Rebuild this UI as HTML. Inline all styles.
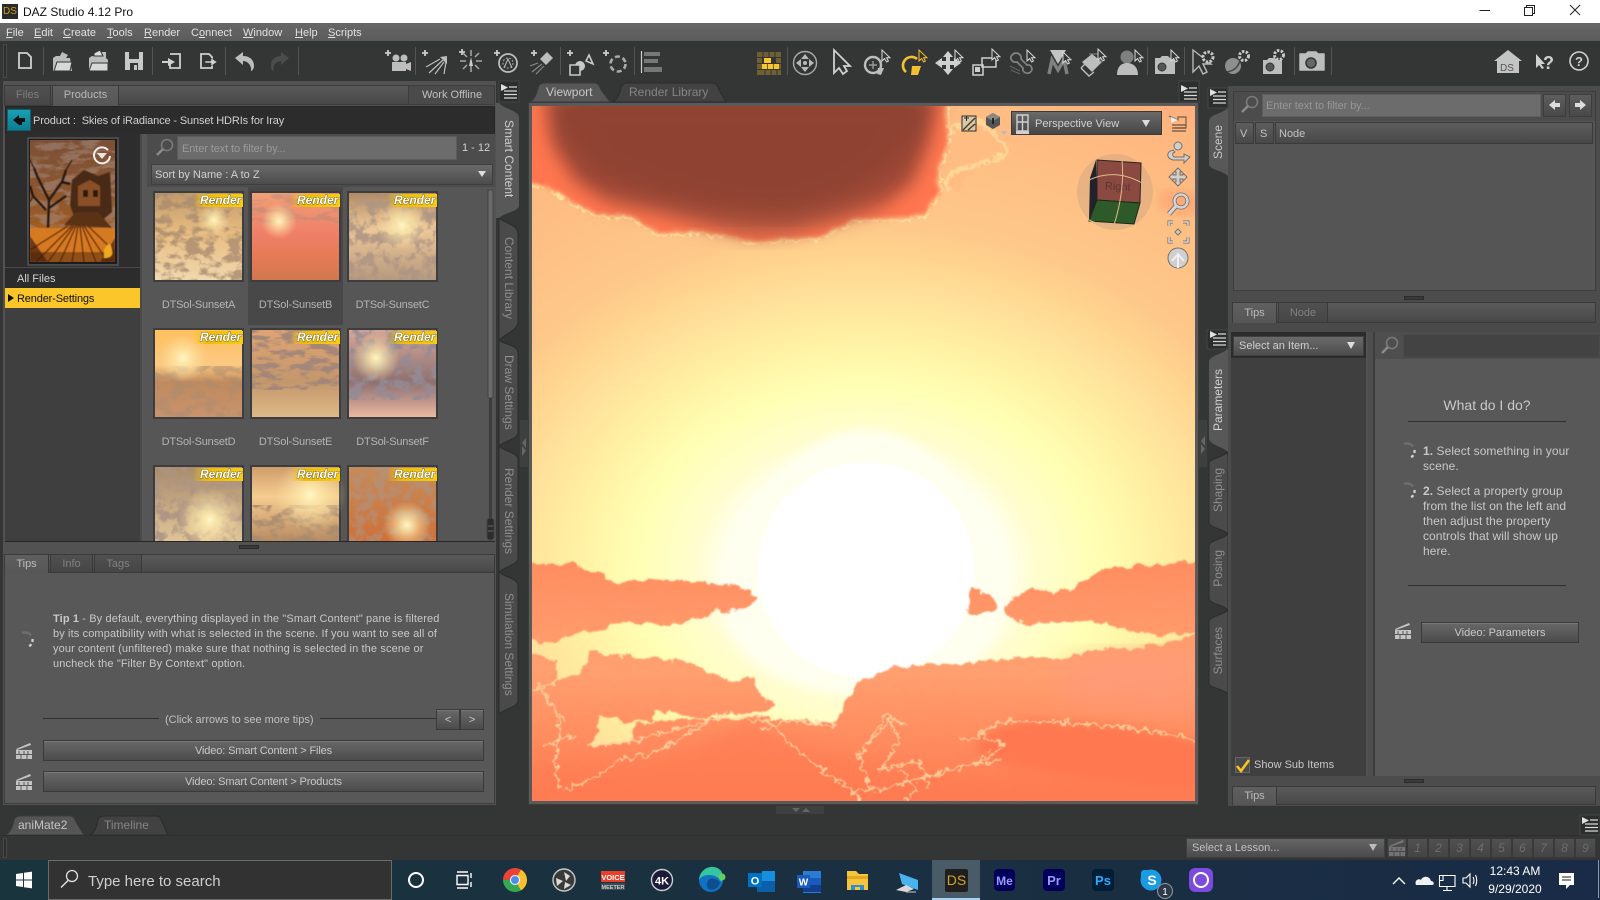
<!DOCTYPE html>
<html><head><meta charset="utf-8"><title>DAZ Studio 4.12 Pro</title>
<style>
html,body{margin:0;padding:0;width:1600px;height:900px;overflow:hidden;background:#343535;font-family:"Liberation Sans",sans-serif}
#r{position:relative;width:1600px;height:900px;overflow:hidden;background:#343535}
#r div{position:absolute;box-sizing:border-box}
svg{position:absolute;left:0;top:0;overflow:visible}
#sky{overflow:hidden}
.t{font-size:11px;line-height:16px;height:16px;white-space:nowrap;color:#c4c4c4;margin-top:1px}
.c{text-align:center}
.u{text-decoration:underline;text-underline-offset:1px}
.tip{letter-spacing:.12px}
.lb{letter-spacing:-.2px}
.st{letter-spacing:.06px;margin-top:0}
.btn{background:linear-gradient(#686868,#4c4c4c);border:1px solid #3a3a3a;box-shadow:inset 0 1px 0 #777;color:#c8c8c8;font-size:11px;text-align:center;line-height:21px;letter-spacing:-.13px}
.strip{background:linear-gradient(#5e5e5e,#484848);border:1px solid #3a3a3a}
.tab{background:linear-gradient(#5f5f5f,#565656);border:1px solid #3a3a3a;border-bottom:0;font-size:11px;text-align:center;color:#b4b4b4;line-height:19px}
.tabi{background:linear-gradient(#505050,#464646);border:1px solid #3a3a3a;font-size:11px;text-align:center;color:#858585;line-height:19px}
.vd{writing-mode:vertical-rl;font-size:12px;line-height:16px;white-space:nowrap;width:16px;text-align:center}
.vu{writing-mode:vertical-rl;transform:rotate(180deg);font-size:12px;line-height:16px;white-space:nowrap;width:16px;text-align:center}
.grip{background:#3a3a3a;border:1px solid #2c2c2c;height:4px}
.num{font-size:12px;font-style:italic;text-align:center;color:#6c6c6c;background:linear-gradient(#505050,#444);border:1px solid #393939;line-height:19px}
</style></head><body><div id="r">

<!-- title bar -->
<div style="left:0;top:0;width:1600px;height:23px;background:#fff"></div>
<div style="left:2px;top:4px;width:16px;height:15px;background:#2a2a2a"></div>
<div class="t" style="left:3px;top:3px;width:15px;font-size:10px;color:#c8a020">DS</div>
<div class="t" style="left:23px;top:3px;font-size:12px;color:#111">DAZ Studio 4.12 Pro</div>

<!-- menu -->
<div style="left:0;top:23px;width:1600px;height:18px;background:linear-gradient(#676767,#5b5b5b)"></div>
<div class="t" style="left:6px;top:24px;color:#e0e0e0"><span class="u">F</span>ile</div>
<div class="t" style="left:34px;top:24px;color:#e0e0e0"><span class="u">E</span>dit</div>
<div class="t" style="left:63px;top:24px;color:#e0e0e0"><span class="u">C</span>reate</div>
<div class="t" style="left:107px;top:24px;color:#e0e0e0"><span class="u">T</span>ools</div>
<div class="t" style="left:144px;top:24px;color:#e0e0e0"><span class="u">R</span>ender</div>
<div class="t" style="left:191px;top:24px;color:#e0e0e0">C<span class="u">o</span>nnect</div>
<div class="t" style="left:243px;top:24px;color:#e0e0e0"><span class="u">W</span>indow</div>
<div class="t" style="left:295px;top:24px;color:#e0e0e0"><span class="u">H</span>elp</div>
<div class="t" style="left:328px;top:24px;color:#e0e0e0"><span class="u">S</span>cripts</div>

<!-- viewport frame & sky -->
<div style="left:528px;top:102px;width:671px;height:703px;background:#5a5a5a;border:1px solid #3c3c3c"></div>
<svg id="sky" style="left:532px;top:106px" width="663" height="695" viewBox="532 106 663 695">
<defs>
<radialGradient id="skyg" gradientUnits="userSpaceOnUse" cx="866" cy="570" r="560" gradientTransform="translate(866 570) scale(1.25 1) translate(-866 -570)">
<stop offset="0" stop-color="#fff"/><stop offset=".2" stop-color="#fffff0"/><stop offset=".24" stop-color="#fffdd0"/><stop offset=".33" stop-color="#ffffb4"/><stop offset=".42" stop-color="#fff0a2"/><stop offset=".5" stop-color="#ffe09a"/><stop offset=".56" stop-color="#ffd48e"/><stop offset=".62" stop-color="#fec88a"/><stop offset=".8" stop-color="#febc82"/><stop offset="1" stop-color="#fdb07c"/>
</radialGradient>
<linearGradient id="cl" x1="0" y1="0" x2="0" y2="1"><stop offset="0" stop-color="#8f4233"/><stop offset=".6" stop-color="#a04837"/><stop offset="1" stop-color="#b85a40"/></linearGradient>
<linearGradient id="lc" gradientUnits="userSpaceOnUse" x1="0" y1="560" x2="0" y2="801"><stop offset="0" stop-color="#ff8d60"/><stop offset=".45" stop-color="#ffa070"/><stop offset="1" stop-color="#ff7a50"/></linearGradient>
<filter id="fz" x="-5%" y="-5%" width="110%" height="110%"><feTurbulence type="fractalNoise" baseFrequency=".09" numOctaves="4" seed="4"/><feDisplacementMap in="SourceGraphic" scale="11" xChannelSelector="R" yChannelSelector="G"/><feGaussianBlur stdDeviation=".8"/></filter>
<filter id="fzb" x="-5%" y="-5%" width="110%" height="110%"><feTurbulence type="fractalNoise" baseFrequency=".08" numOctaves="3" seed="4"/><feDisplacementMap in="SourceGraphic" scale="6" xChannelSelector="R" yChannelSelector="G"/><feGaussianBlur stdDeviation="2.4"/></filter>
<filter id="fv" x="-5%" y="-5%" width="110%" height="110%"><feTurbulence type="fractalNoise" baseFrequency=".14" numOctaves="3" seed="8"/><feDisplacementMap in="SourceGraphic" scale="12" xChannelSelector="R" yChannelSelector="G"/><feGaussianBlur stdDeviation=".5"/></filter>
<filter id="b12"><feGaussianBlur stdDeviation="12"/></filter>
<filter id="b9"><feGaussianBlur stdDeviation="9"/></filter>
<filter id="b5"><feGaussianBlur stdDeviation="5"/></filter>
</defs>
<rect x="532" y="106" width="663" height="695" fill="url(#skyg)"/>
<path d="M866 430C930 430 985 500 1005 590 1000 640 980 680 866 690 760 690 720 640 725 590 745 500 800 430 866 430Z" fill="#fffff0" filter="url(#b5)"/>
<circle cx="866" cy="570" r="108" fill="#fff"/>
<!-- top right flecks -->
<path d="M945 106H1020L1012 130 1000 150 975 165 958 190 940 190Z" fill="#ffbd84" filter="url(#fz)"/>
<path d="M950 130Q975 115 985 125T1005 145 975 165 950 190" fill="none" stroke="#ffe3a2" stroke-width="4" filter="url(#fv)" opacity=".7"/>
<path d="M1160 192Q1180 188 1200 196V214Q1175 216 1160 208Z" fill="#ff9a6c" filter="url(#b5)" opacity=".55"/>
<path d="M1040 100H1200V125Q1120 110 1040 100Z" fill="#ffb07c" filter="url(#b5)"/>
<!-- dark cloud -->
<path d="M525 181 551 190 572 203 598 217 628 217 658 235 697 233 727 237 757 244 792 240 818 240 856 220 899 220 925 217 940 193 940 167 949 143 947 96H525Z" fill="none" stroke="#ffeeaa" stroke-width="2.4" filter="url(#fv)"/>
<path d="M525 181 551 188 572 201 598 215 628 215 658 233 697 231 727 235 757 242 792 238 818 238 856 218 899 218 925 215 938 193 938 167 947 143 945 96H525Z" fill="#ff7650" filter="url(#fzb)"/>
<path d="M546 96 552 143 575 180 608 202 654 212 706 226 749 236 792 234 835 222 882 207 912 183 928 143 938 96Z" fill="url(#cl)" filter="url(#b9)"/>
<path d="M565 96 575 143 600 175 660 195 720 210 790 215 850 195 890 165 910 130 915 96Z" fill="#8f4233" filter="url(#b12)"/>
<!-- lower clouds -->
<g filter="url(#fz)" fill="url(#lc)">
<path d="M520 565 568 563 602 573 609 583 654 580 697 582 740 587 761 598 745 607 714 613 671 625 620 623 598 630 577 633 551 643 520 640Z"/>
<path d="M1206 562 1145 565 1102 570 1080 585 1054 592 1033 587 1007 603 1005 613 1029 625 1085 620 1128 630 1158 635 1206 632Z"/>
<path d="M973 588 990 593 996 607 981 617 966 613Z"/>
<path d="M520 650 555 660 559 680 581 673 590 652 637 657 684 660 727 680 753 677 762 697 779 707 762 713 723 712 697 718 654 710 654 720 628 722 598 717 598 737 585 747 628 742 637 723 719 717 783 720 835 723 856 683 895 667 955 663 1037 657 1059 660 1089 650 1128 650 1206 633V812H520Z"/>
</g>
<path d="M1060 665Q1130 650 1190 650V715Q1120 705 1060 700Z" fill="#ff9a7a" filter="url(#b12)" opacity=".7"/>
<path d="M530 760Q620 780 700 745T760 720 850 760 980 790 1200 760V812H530Z" fill="#ff7c52" filter="url(#b9)" opacity=".7"/>
<path d="M980 740Q1010 715 1060 722 1130 725 1200 742V790Q1100 785 1030 770T980 740Z" fill="#ff7850" filter="url(#b5)"/>
<g fill="none" stroke="#ffdca8" filter="url(#fv)" stroke-width="1.8" opacity=".85">
<path d="M975 738 1000 722 1060 722 1130 728 1200 740"/>
<path d="M552 700 560 730 555 765 560 790M540 690 565 720M545 745 575 735M565 790 590 780 620 760 650 755 720 715 770 722 790 745 850 790 880 790 950 770 1000 760"/>
<path d="M532 690 560 680"/>
<path d="M855 760 890 720 900 740 880 770 920 760 930 790M870 740 885 715 905 725M900 770 915 790 905 800"/>
<path d="M590 745 630 742 720 717"/>
<path d="M760 730 790 720 835 725M850 790 860 800"/>
<path d="M960 740 985 735 1005 745 975 765"/>
<path d="M858 750 870 790"/>
</g>
<!-- cube -->
<ellipse cx="1115" cy="192" rx="38" ry="38" fill="#c8a080" opacity=".4"/>
<path d="M1096 160 1090 178 1089 221 1097 202Z" fill="#22222c"/>
<path d="M1097 160 1141 163 1140 203 1097 200Z" fill="#8a4a42" stroke="#2e2220"/>
<path d="M1097 200 1140 203 1134 224 1089 221Z" fill="#2d5a28" stroke="#1a2a18"/>
<text x="1105" y="190" font-size="11" fill="#5e3632" font-family="Liberation Sans" transform="rotate(3 1115 186)">Right</text>
<path d="M1089 180Q1115 168 1142 183M1122 160Q1125 190 1114 225M1089 220Q1105 228 1134 225" fill="none" stroke="#e0b890" stroke-width="1"/>
</svg>

<!-- viewport combo -->
<div style="left:1011px;top:111px;width:151px;height:24px;background:linear-gradient(#6a6a6a,#464646);border:1px solid #3a3a3a"></div>
<div class="t" style="left:1035px;top:115px;color:#d0d0d0">Perspective View</div>

<!-- tabs viewport -->
<svg width="1600" height="900">
<path d="M530 102Q536 98 538 88Q539 83 545 83H594Q599 83 601 90L610 102Z" fill="#575757" stroke="#3a3a3a"/>
<path d="M613 102Q619 98 621 88Q622 83 628 83H712Q717 83 719 90L726 102Z" fill="#424242" stroke="#2c2c2c"/>
<path d="M5 835Q12 832 14 820Q15 816 21 816H70Q74 816 76 822L84 835Z" fill="#555" stroke="#3a3a3a"/>
<path d="M90 835Q96 832 98 820Q99 816 105 816H156Q160 816 162 822L168 835Z" fill="#424242" stroke="#2c2c2c"/>
</svg>
<div class="t" style="left:546px;top:83px;font-size:12px;color:#c8c8c8">Viewport</div>
<div class="t" style="left:629px;top:83px;font-size:12px;color:#858585">Render Library</div>
<div class="t" style="left:18px;top:816px;font-size:12px;color:#c4c4c4">aniMate2</div>
<div class="t" style="left:104px;top:816px;font-size:12px;color:#858585">Timeline</div>

<!-- LEFT panel -->
<div style="left:3px;top:81px;width:493px;height:724px;background:#525252"></div>
<div style="left:4px;top:85px;width:491px;height:20px;background:linear-gradient(#5a5a5a,#484848);border:1px solid #3a3a3a"></div>
<div class="tabi" style="left:4px;top:85px;width:47px;height:21px;color:#7f7f7f">Files</div>
<div class="tab" style="left:52px;top:85px;width:67px;height:21px;color:#b8b8b8">Products</div>
<div style="left:408px;top:85px;width:87px;height:20px;background:#4a4a4a;border:1px solid #3d3d3d"></div>
<div class="t" style="left:422px;top:86px;color:#c0c0c0">Work Offline</div>
<div style="left:5px;top:106px;width:490px;height:436px;background:#2c2c2c;border:1px solid #262626"></div>
<div style="left:7px;top:109px;width:24px;height:22px;background:linear-gradient(#18a0b4,#0e7c90);border:1px solid #0c6070"></div>
<div class="t" style="left:33px;top:112px;color:#d0d0d0;letter-spacing:-.13px">Product :&nbsp; Skies of iRadiance - Sunset HDRIs for Iray</div>
<div style="left:5px;top:134px;width:135px;height:407px;background:#3f3f3f"></div>
<div style="left:5px;top:134px;width:135px;height:133px;background:#2d2d2d"></div>
<div style="left:5px;top:267px;width:135px;height:21px;background:#2c2c2c;border-top:1px solid #4a4a4a"></div>
<div class="t" style="left:17px;top:270px;color:#d4d4d4">All Files</div>
<div style="left:5px;top:288px;width:135px;height:20px;background:#fac62a"></div>
<div class="t" style="left:17px;top:290px;color:#111;letter-spacing:-.15px">Render-Settings</div>
<div style="left:8px;top:294px;width:0;height:0;border-left:6px solid #111;border-top:4px solid transparent;border-bottom:4px solid transparent"></div>
<div style="left:140px;top:134px;width:7px;height:407px;background:#565656;border-left:2px solid #4a4a4a"></div>
<div style="left:147px;top:134px;width:348px;height:407px;background:#565656"></div>
<div style="left:147px;top:134px;width:348px;height:53px;background:#4c4c4c"></div>
<div style="left:177px;top:136px;width:280px;height:24px;background:#6c6c6c;border:1px solid #5c5c5c"></div>
<div class="t" style="left:182px;top:140px;color:#9a9a9a;letter-spacing:-.1px">Enter text to filter by...</div>
<div class="t" style="left:462px;top:139px;color:#d0d0d0">1 - 12</div>
<div style="left:151px;top:164px;width:342px;height:21px;background:linear-gradient(#6a6a6a,#4c4c4c);border:1px solid #3f3f3f"></div>
<div class="t" style="left:155px;top:166px;color:#d0d0d0">Sort by Name : A to Z</div>
<div style="left:248px;top:187px;width:95px;height:138px;background:#484848"></div>

<!-- thumbs -->
<svg width="1600" height="900">
<defs>
<filter id="n1" x="0" y="0" width="1" height="1"><feTurbulence type="fractalNoise" baseFrequency=".07 .11" numOctaves="5" seed="3"/><feColorMatrix values="0 0 0 0 .40 0 0 0 0 .26 0 0 0 0 .16 5 0 0 0 -2.2"/></filter>
<filter id="n2" x="0" y="0" width="1" height="1"><feTurbulence type="fractalNoise" baseFrequency=".09" numOctaves="5" seed="9"/><feColorMatrix values="0 0 0 0 .42 0 0 0 0 .30 0 0 0 0 .23 5 0 0 0 -2.2"/></filter>
<filter id="n3" x="0" y="0" width="1" height="1"><feTurbulence type="fractalNoise" baseFrequency=".05 .14" numOctaves="5" seed="15"/><feColorMatrix values="0 0 0 0 .36 0 0 0 0 .24 0 0 0 0 .19 5.500 0 0 0 -2.500"/></filter>
<filter id="n4" x="0" y="0" width="1" height="1"><feTurbulence type="fractalNoise" baseFrequency=".08 .1" numOctaves="5" seed="21"/><feColorMatrix values="0 0 0 0 .30 0 0 0 0 .26 0 0 0 0 .30 5 0 0 0 -2.200"/></filter>
<linearGradient id="tA" x1="0" y1="0" x2="0" y2="1"><stop offset="0" stop-color="#c09a6c"/><stop offset=".45" stop-color="#e8bc80"/><stop offset="1" stop-color="#f0d8ae"/></linearGradient>
<linearGradient id="tB" x1="0" y1="0" x2="0" y2="1"><stop offset="0" stop-color="#f0a078"/><stop offset=".45" stop-color="#f0806a"/><stop offset=".7" stop-color="#e87b58"/><stop offset="1" stop-color="#d2774f"/></linearGradient>
<linearGradient id="tC" x1="0" y1="0" x2="0" y2="1"><stop offset="0" stop-color="#b08a64"/><stop offset=".4" stop-color="#eec898"/><stop offset="1" stop-color="#b79a7e"/></linearGradient>
<linearGradient id="tD" x1="0" y1="0" x2="0" y2="1"><stop offset="0" stop-color="#ffc05e"/><stop offset=".4" stop-color="#fbc982"/><stop offset=".6" stop-color="#c08a5e"/><stop offset="1" stop-color="#c8936e"/></linearGradient>
<linearGradient id="tE" x1="0" y1="0" x2="0" y2="1"><stop offset="0" stop-color="#e0a474"/><stop offset=".6" stop-color="#c4976c"/><stop offset="1" stop-color="#deb988"/></linearGradient>
<linearGradient id="tF" x1="0" y1="0" x2="0" y2="1"><stop offset="0" stop-color="#d6a898"/><stop offset=".6" stop-color="#8e7070"/><stop offset="1" stop-color="#eab8a0"/></linearGradient>
<linearGradient id="tG" x1="0" y1="0" x2="0" y2="1"><stop offset="0" stop-color="#a88c6c"/><stop offset="1" stop-color="#e0c498"/></linearGradient>
<linearGradient id="tH" x1="0" y1="0" x2="0" y2="1"><stop offset="0" stop-color="#d09c6c"/><stop offset=".4" stop-color="#f6cc90"/><stop offset="1" stop-color="#b88c64"/></linearGradient>
<linearGradient id="tI" x1="0" y1="0" x2="0" y2="1"><stop offset="0" stop-color="#c48c5c"/><stop offset="1" stop-color="#d07038"/></linearGradient>
<radialGradient id="gl"><stop offset="0" stop-color="#fff6c8"/><stop offset=".2" stop-color="#ffeeb0" stop-opacity=".85"/><stop offset="1" stop-color="#ffe0a0" stop-opacity="0"/></radialGradient>
<linearGradient id="bdg" x1="0" y1="0" x2="1" y2="0"><stop offset="0" stop-color="#f5c400" stop-opacity="0"/><stop offset=".3" stop-color="#eebc08"/><stop offset="1" stop-color="#f8cc10"/></linearGradient>
<clipPath id="rc"><rect x="153" y="467" width="285" height="74"/></clipPath>
<clipPath id="pc"><rect x="30" y="140" width="85" height="122"/></clipPath>
<filter id="sb"><feGaussianBlur stdDeviation=".6"/></filter>
</defs>
<g fill="#3d3d3d">
<rect x="153" y="191" width="91" height="91"/><rect x="250" y="191" width="91" height="91"/><rect x="347" y="191" width="91" height="91"/>
<rect x="153" y="328" width="91" height="91"/><rect x="250" y="328" width="91" height="91"/><rect x="347" y="328" width="91" height="91"/>
<rect x="153" y="465" width="91" height="76"/><rect x="250" y="465" width="91" height="76"/><rect x="347" y="465" width="91" height="76"/>
</g>
<rect x="155" y="193" width="87" height="87" fill="url(#tA)"/><rect x="155" y="193" width="87" height="87" filter="url(#n1)" opacity=".8"/><circle cx="214" cy="220" r="16" fill="url(#gl)"/>
<rect x="252" y="193" width="87" height="87" fill="url(#tB)"/><rect x="252" y="193" width="87" height="30" filter="url(#n3)" opacity=".35"/><circle cx="279" cy="221" r="18" fill="url(#gl)"/>
<rect x="349" y="193" width="87" height="87" fill="url(#tC)"/><rect x="349" y="193" width="87" height="87" filter="url(#n2)" opacity=".85"/><circle cx="402" cy="225" r="26" fill="url(#gl)"/>
<rect x="155" y="330" width="87" height="87" fill="url(#tD)"/><rect x="155" y="366" width="87" height="51" filter="url(#n1)" opacity=".5"/><circle cx="183" cy="358" r="24" fill="url(#gl)"/>
<rect x="252" y="330" width="87" height="87" fill="url(#tE)"/><rect x="252" y="330" width="87" height="60" filter="url(#n3)" opacity=".95"/>
<rect x="349" y="330" width="87" height="87" fill="url(#tF)"/><rect x="349" y="330" width="87" height="70" filter="url(#n4)" opacity=".9"/><circle cx="376" cy="358" r="24" fill="url(#gl)"/>
<rect x="155" y="467" width="87" height="74" fill="url(#tG)"/><rect x="155" y="467" width="87" height="74" filter="url(#n2)" opacity=".9"/>
<rect x="252" y="467" width="87" height="74" fill="url(#tH)"/><rect x="252" y="505" width="87" height="36" filter="url(#n1)" opacity=".85"/>
<rect x="349" y="467" width="87" height="74" fill="url(#tI)"/><rect x="349" y="467" width="87" height="74" filter="url(#n2)" opacity=".6"/>
<g clip-path="url(#rc)"><circle cx="210" cy="520" r="32" fill="url(#gl)"/><circle cx="310" cy="495" r="36" fill="url(#gl)"/><circle cx="407" cy="525" r="24" fill="url(#gl)"/></g>
<g fill="url(#bdg)">
<rect x="193" y="194" width="50" height="13"/><rect x="290" y="194" width="50" height="13"/><rect x="387" y="194" width="50" height="13"/>
<rect x="193" y="331" width="50" height="13"/><rect x="290" y="331" width="50" height="13"/><rect x="387" y="331" width="50" height="13"/>
<rect x="193" y="468" width="50" height="13"/><rect x="290" y="468" width="50" height="13"/><rect x="387" y="468" width="50" height="13"/>
</g>
<g font-family="Liberation Sans" font-size="12" font-weight="bold" font-style="italic" fill="#fff" style="paint-order:stroke" stroke="#5a4a10" stroke-width=".8">
<text x="200" y="204">Render</text><text x="297" y="204">Render</text><text x="394" y="204">Render</text>
<text x="200" y="341">Render</text><text x="297" y="341">Render</text><text x="394" y="341">Render</text>
<text x="200" y="478">Render</text><text x="297" y="478">Render</text><text x="394" y="478">Render</text>
</g>
<!-- product thumb -->
<rect x="27" y="137" width="92" height="129" fill="#4a4a4a"/><rect x="29" y="139" width="88" height="125" fill="#1c1c1c"/>
<defs><linearGradient id="pt" x1="0" y1="0" x2="0" y2="1"><stop offset="0" stop-color="#7c5036"/><stop offset=".4" stop-color="#8a5630"/><stop offset=".68" stop-color="#9c5a24"/><stop offset=".85" stop-color="#c4701f"/><stop offset="1" stop-color="#6e3a18"/></linearGradient></defs>
<g clip-path="url(#pc)">
<rect x="30" y="140" width="85" height="122" fill="url(#pt)"/>
<rect x="30" y="140" width="85" height="122" filter="url(#n3)" opacity=".6"/>
<g filter="url(#sb)">
<path d="M72 180 84 170 98 176 110 172 112 212 100 222 76 222 70 205Z" fill="#4a2a18"/>
<path d="M78 186 90 180 100 186V206H78Z" fill="#8a5026"/><path d="M83 190h5v7h-5zM93 190h5v7h-5z" fill="#2c1a10"/>
<g stroke="#24130a" fill="none"><path d="M48 228 49 200 38 178M49 200 62 182 70 184M49 208 66 196M46 210 33 196 30 186M38 178 34 168M62 182 66 170" stroke-width="2.2"/><path d="M34 168 30 160M66 170 72 160M33 196 30 202" stroke-width="1"/></g>
<path d="M64 225 76 212H98L112 228Z" fill="#5a3018"/>
<path d="M30 228H115V262H30Z" fill="#d67a22"/>
<g stroke="#6e3010" stroke-width="1.5"><path d="M72 226 36 262M74 226 48 262M76 226 60 262M78 226 72 262M80 226 84 262M82 226 96 262M84 226 108 262M68 226 30 250M88 226 115 252"/></g>
<path d="M30 236V262H48Z M115 238V262H100Z" fill="#3e1e0c" opacity=".7"/>
<path d="M30 252H115V262H30Z" fill="#4a2410" opacity=".5"/>
<path d="M104 250Q110 238 112 250Q114 258 104 258Z" fill="#f0a820"/>
</g></g>
<path d="M108 150A8 8 0 1 0 110 156" fill="none" stroke="#f0f0f0" stroke-width="2"/>
<path d="M97 153H107L102 159Z" fill="#e8e8e8"/>
<!-- scrollbars -->
<rect x="488" y="190" width="5" height="208" fill="#6a6a6a" stroke="#444"/>
<rect x="489" y="398" width="3" height="120" fill="#3c3c3c"/>
<rect x="487" y="518" width="7" height="22" rx="3" fill="#2c2c2c" stroke="#444"/>
<path d="M488 526h5M488 531h5" stroke="#666"/>
</svg>
<div class="t c lb" style="left:153px;top:296px;width:91px;color:#b4b4b4">DTSol-SunsetA</div>
<div class="t c lb" style="left:250px;top:296px;width:91px;color:#b4b4b4">DTSol-SunsetB</div>
<div class="t c lb" style="left:347px;top:296px;width:91px;color:#b4b4b4">DTSol-SunsetC</div>
<div class="t c lb" style="left:153px;top:433px;width:91px;color:#b4b4b4">DTSol-SunsetD</div>
<div class="t c lb" style="left:250px;top:433px;width:91px;color:#b4b4b4">DTSol-SunsetE</div>
<div class="t c lb" style="left:347px;top:433px;width:91px;color:#b4b4b4">DTSol-SunsetF</div>

<!-- Left lower -->
<div class="grip" style="left:239px;top:545px;width:20px"></div>
<div style="left:4px;top:554px;width:491px;height:19px;background:linear-gradient(#5a5a5a,#484848);border:1px solid #3a3a3a"></div>
<div class="tab" style="left:4px;top:554px;width:45px;height:20px;color:#bbb;line-height:18px">Tips</div>
<div class="tabi" style="left:50px;top:554px;width:43px;height:19px;color:#808080;line-height:18px">Info</div>
<div class="tabi" style="left:94px;top:554px;width:48px;height:19px;color:#808080;line-height:18px">Tags</div>
<div style="left:4px;top:573px;width:491px;height:231px;background:#585858;border:1px solid #3e3e3e;border-top:0"></div>
<div class="t tip" style="left:53px;top:610px;color:#c8c8c8"><b>Tip 1</b> - By default, everything displayed in the "Smart Content" pane is filtered</div>
<div class="t tip" style="left:53px;top:625px;color:#c8c8c8">by its compatibility with what is selected in the scene. If you want to see all of</div>
<div class="t tip" style="left:53px;top:640px;color:#c8c8c8">your content (unfiltered) make sure that nothing is selected in the scene or</div>
<div class="t tip" style="left:53px;top:655px;color:#c8c8c8">uncheck the "Filter By Context" option.</div>
<div style="left:43px;top:718px;width:116px;height:1px;background:#2f2f2f"></div>
<div style="left:320px;top:718px;width:116px;height:1px;background:#2f2f2f"></div>
<div class="t" style="left:165px;top:711px;color:#c0c0c0">(Click arrows to see more tips)</div>
<div class="btn" style="left:436px;top:709px;width:24px;height:21px;line-height:20px">&lt;</div>
<div class="btn" style="left:460px;top:709px;width:24px;height:21px;line-height:20px">&gt;</div>
<div class="btn" style="left:43px;top:740px;width:441px;height:21px">Video: Smart Content &gt; Files</div>
<div class="btn" style="left:43px;top:771px;width:441px;height:21px">Video: Smart Content &gt; Products</div>

<!-- left dock tabs -->
<svg width="1600" height="900">
<path d="M499 218C505 224 518 224 518 234V322C518 330 505 334 499 340Z" fill="#4a4a4a" stroke="#2c2c2c"/>
<path d="M499 340C505 345 518 345 518 353V432C518 440 505 440 499 446Z" fill="#4a4a4a" stroke="#2c2c2c"/>
<path d="M499 446C505 452 518 452 518 460V558C518 565 505 566 499 572Z" fill="#4a4a4a" stroke="#2c2c2c"/>
<path d="M499 572C505 578 518 578 518 586V700C518 708 505 708 499 714Z" fill="#4a4a4a" stroke="#2c2c2c"/>
<path d="M496 103H499C505 110 519 110 519 118V205C519 212 505 212 499 218H496Z" fill="#585858"/>
<!-- right dock -->
<path d="M1228 108C1222 114 1209 114 1209 122V164C1209 170 1222 170 1228 176Z" fill="#585858"/>
<path d="M1228 349C1222 354 1209 356 1209 362V438C1209 445 1222 446 1228 452Z" fill="#585858"/>
<path d="M1228 452C1222 458 1209 458 1209 464V522C1209 528 1222 528 1228 534Z" fill="#4a4a4a" stroke="#2c2c2c"/>
<path d="M1228 534C1222 540 1209 540 1209 546V598C1209 604 1222 604 1228 610Z" fill="#4a4a4a" stroke="#2c2c2c"/>
<path d="M1228 610C1222 616 1209 616 1209 622V683C1209 688 1222 688 1228 694Z" fill="#4a4a4a" stroke="#2c2c2c"/>
<!-- collapse handles -->
<rect x="520" y="420" width="8" height="47" fill="#3e3f3f"/><path d="M526 438 522 443 526 448ZM522 446 526 451 522 456Z" fill="#666"/>
<rect x="1199" y="420" width="8" height="47" fill="#3e3f3f"/><path d="M1205 436 1201 441 1205 446ZM1201 444 1205 449 1201 454Z" fill="#666"/>
</svg>
<div class="vd" style="left:501px;top:120px;color:#cfcfcf">Smart Content</div>
<div class="vd" style="left:501px;top:237px;color:#8f8f8f">Content Library</div>
<div class="vd" style="left:501px;top:355px;color:#8f8f8f">Draw Settings</div>
<div class="vd" style="left:501px;top:468px;color:#8f8f8f">Render Settings</div>
<div class="vd" style="left:501px;top:593px;color:#8f8f8f">Simulation Settings</div>
<div class="vu" style="left:1210px;top:125px;color:#c8c8c8">Scene</div>
<div class="vu" style="left:1210px;top:369px;color:#d0d0d0">Parameters</div>
<div class="vu" style="left:1210px;top:468px;color:#8f8f8f">Shaping</div>
<div class="vu" style="left:1210px;top:550px;color:#8f8f8f">Posing</div>
<div class="vu" style="left:1210px;top:627px;color:#8f8f8f">Surfaces</div>

<!-- RIGHT panel -->
<div style="left:1228px;top:86px;width:372px;height:720px;background:#4c4c4c"></div>
<div style="left:1233px;top:91px;width:363px;height:200px;background:#555;border:1px solid #3e3e3e"></div>
<div style="left:1234px;top:92px;width:361px;height:29px;background:#4c4c4c"></div>
<div style="left:1262px;top:94px;width:279px;height:23px;background:#6c6c6c;border:1px solid #5e5e5e"></div>
<div class="t" style="left:1266px;top:97px;color:#969696;letter-spacing:-.1px">Enter text to filter by...</div>
<div style="left:1543px;top:94px;width:23px;height:23px;background:linear-gradient(#5e5e5e,#484848);border:1px solid #3d3d3d"></div>
<div style="left:1569px;top:94px;width:23px;height:23px;background:linear-gradient(#5e5e5e,#484848);border:1px solid #3d3d3d"></div>
<div class="strip" style="left:1235px;top:122px;width:19px;height:22px"></div>
<div class="strip" style="left:1255px;top:122px;width:19px;height:22px"></div>
<div class="strip" style="left:1275px;top:122px;width:318px;height:22px"></div>
<div class="t" style="left:1240px;top:125px;color:#c4c4c4">V</div>
<div class="t" style="left:1260px;top:125px;color:#c4c4c4">S</div>
<div class="t" style="left:1279px;top:125px;color:#c4c4c4">Node</div>
<div class="grip" style="left:1404px;top:296px;width:20px"></div>
<div style="left:1232px;top:302px;width:364px;height:21px;background:linear-gradient(#5a5a5a,#484848);border:1px solid #3a3a3a"></div>
<div class="tab" style="left:1232px;top:302px;width:45px;height:21px;color:#bbb;line-height:21px">Tips</div>
<div class="tabi" style="left:1278px;top:302px;width:50px;height:21px;color:#808080;line-height:21px">Node</div>
<div style="left:1228px;top:323px;width:372px;height:9px;background:#4a4a4a"></div>
<div style="left:1231px;top:332px;width:135px;height:444px;background:#3f3f3f"></div>
<div style="left:1231px;top:332px;width:135px;height:26px;background:#2c2c2c"></div>
<div style="left:1233px;top:336px;width:131px;height:20px;background:linear-gradient(#6a6a6a,#4c4c4c);border:1px solid #3f3f3f"></div>
<div class="t" style="left:1239px;top:337px;color:#d0d0d0">Select an Item...</div>
<div style="left:1366px;top:332px;width:9px;height:444px;background:#4e4e4e;border-left:2px solid #525252;border-right:2px solid #3d3d3d"></div>
<div style="left:1375px;top:332px;width:225px;height:444px;background:#585858"></div>
<div style="left:1375px;top:332px;width:225px;height:27px;background:#4e4e4e"></div>
<div style="left:1403px;top:334px;width:197px;height:24px;background:#434343;border:1px solid #4a4a4a"></div>
<div class="t c" style="left:1407px;top:396px;width:160px;font-size:14px;color:#c8c8c8">What do I do?</div>
<div style="left:1408px;top:421px;width:158px;height:1px;background:#2e2e2e"></div>
<div class="t st" style="left:1423px;top:443px;font-size:12px;color:#c8c8c8"><b>1.</b> Select something in your</div>
<div class="t st" style="left:1423px;top:458px;font-size:12px;color:#c8c8c8">scene.</div>
<div class="t st" style="left:1423px;top:483px;font-size:12px;color:#c8c8c8"><b>2.</b> Select a property group</div>
<div class="t st" style="left:1423px;top:498px;font-size:12px;color:#c8c8c8">from the list on the left and</div>
<div class="t st" style="left:1423px;top:513px;font-size:12px;color:#c8c8c8">then adjust the property</div>
<div class="t st" style="left:1423px;top:528px;font-size:12px;color:#c8c8c8">controls that will show up</div>
<div class="t st" style="left:1423px;top:543px;font-size:12px;color:#c8c8c8">here.</div>
<div style="left:1408px;top:585px;width:158px;height:1px;background:#2e2e2e"></div>
<div class="btn" style="left:1421px;top:622px;width:158px;height:21px;letter-spacing:0">Video: Parameters</div>
<div style="left:1235px;top:757px;width:15px;height:16px;background:#4a4a4a;border:1px solid #666"></div>
<div class="t" style="left:1254px;top:756px;color:#c8c8c8">Show Sub Items</div>
<div class="grip" style="left:1404px;top:779px;width:20px"></div>
<div style="left:1232px;top:786px;width:364px;height:19px;background:linear-gradient(#5a5a5a,#484848);border:1px solid #3a3a3a"></div>
<div class="tab" style="left:1232px;top:786px;width:45px;height:19px;line-height:18px;color:#bbb">Tips</div>

<!-- bottom strip -->
<div style="left:0;top:835px;width:1600px;height:1px;background:#2e2e2e"></div>
<div style="left:1186px;top:838px;width:199px;height:20px;background:linear-gradient(#666,#4a4a4a);border:1px solid #3f3f3f"></div>
<div class="t" style="left:1192px;top:839px;color:#c0c0c0">Select a Lesson...</div>
<div class="num" style="left:1387px;top:838px;width:20px;height:20px"></div>
<div class="num" style="left:1407px;top:838px;width:21px;height:20px">1</div>
<div class="num" style="left:1428px;top:838px;width:21px;height:20px">2</div>
<div class="num" style="left:1449px;top:838px;width:21px;height:20px">3</div>
<div class="num" style="left:1470px;top:838px;width:21px;height:20px">4</div>
<div class="num" style="left:1491px;top:838px;width:21px;height:20px">5</div>
<div class="num" style="left:1512px;top:838px;width:21px;height:20px">6</div>
<div class="num" style="left:1533px;top:838px;width:21px;height:20px">7</div>
<div class="num" style="left:1554px;top:838px;width:21px;height:20px">8</div>
<div class="num" style="left:1575px;top:838px;width:21px;height:20px">9</div>
<div style="left:3px;top:838px;width:4px;height:20px;background:#2c2d2d;border:1px solid #484848"></div>
<div style="left:3px;top:44px;width:4px;height:34px;background:#2c2d2d;border:1px solid #484848"></div>
<div style="left:776px;top:806px;width:48px;height:8px;background:#3e3f3f"></div>

<!-- Taskbar -->
<div style="left:0;top:860px;width:1600px;height:40px;background:linear-gradient(90deg,#1a343e,#1a3040 50%,#192b46)"></div>
<div style="left:48px;top:860px;width:344px;height:40px;background:#323232;border:1px solid #6c6c6c"></div>
<div class="t" style="left:88px;top:872px;font-size:15px;line-height:18px;height:18px;color:#cfcfcf">Type here to search</div>
<div style="left:932px;top:860px;width:48px;height:40px;background:#4a5b68;border-bottom:2px solid #a8d4f5"></div>
<div style="left:503px;top:868px;width:24px;height:24px;border-radius:12px;background:conic-gradient(from 30deg,#fbc02d 0 120deg,#34a853 120deg 240deg,#ea4335 240deg 360deg)"></div>
<div style="left:510px;top:875px;width:10px;height:10px;border-radius:5px;background:#4a8cf0;border:1px solid #fff"></div>
<div class="t" style="left:1489px;top:862px;width:52px;font-size:12px;color:#fff;text-align:center">12:43 AM</div>
<div class="t" style="left:1486px;top:880px;width:58px;font-size:12px;color:#fff;text-align:center">9/29/2020</div>

<!-- Icon overlay -->
<svg width="1600" height="900">
<defs>
<g id="menu"><path d="M0 0 7 3.5 0 7Z" fill="#e0e0e0"/><path d="M3 7h13M3 10.5h13M3 14h13M8 3h8" stroke="#d8d8d8" stroke-width="1.2" fill="none"/></g>
<g id="film" fill="#c4c4c4"><rect x="0" y="6" width="16" height="4"/><rect x="0" y="11" width="16" height="4"/><path d="M0 5 14-1 15 1 1 6Z"/><path d="M3 7v3M8 7v3M12 7v3M5 11v4M11 11v4" stroke="#585858" fill="none"/></g>
<g id="spin" fill="none" stroke-width="2.4"><path d="M-3-7A7.600 7.600 0 0 1 6-4.500" stroke="#6e6e6e"/><path d="M7.500-1A7.600 7.600 0 0 1 2 7.300" stroke="#cfcfcf" stroke-dasharray="3 2.400"/></g>
<g id="srch" fill="none"><circle cx="4" cy="-3" r="5.5" stroke="#7a7a7a" stroke-width="1.6"/><path d="M0 1-6 7" stroke="#8a8a8a" stroke-width="2.6"/></g>
<g id="cur"><path d="M0 0V11L2.600 8.600 4.600 12 6.400 11 4.600 7.800H8Z" fill="#343535" stroke="#dcdcdc" stroke-width="1"/></g>
<g id="plus"><path d="M-3 0H3M0-3V3" stroke="#ccc" stroke-width="1.8"/></g>
</defs>
<!-- window ctrl -->
<path d="M1479.500 10.500H1490" stroke="#222" stroke-width="1"/>
<path d="M1524.500 7.500h8v8h-8zM1526.500 7.500v-2h8v8h-2" fill="none" stroke="#222"/>
<path d="M1570 5 1580 15M1580 5 1570 15" stroke="#222"/>
<!-- toolbar separators -->
<g stroke="#555"><path d="M43.500 47V75M152.500 47V75M225.500 47V75M298.500 47V75M415.500 47V75M560.500 47V75M634.500 47V75M787.500 47V75M1147.500 47V75M1184.500 47V75M1294.500 47V75M1331.500 47V75"/></g>
<!-- file group -->
<path d="M19 53H27L31 57V68H19Z" fill="none" stroke="#d0d0d0" stroke-width="1.800"/>
<path d="M53 71V58L56 56H60L62 52 68 55 66 58H70L72 71Z" fill="#bdbdbd"/><path d="M54 71 57 62H72L70 71Z" fill="#d8d8d8" stroke="#343535"/>
<path d="M89 71V58L92 56H98V52L106 52V58L108 60V71Z" fill="#bdbdbd"/><path d="M94 53 100 50 103 56H94Z" fill="#ddd" stroke="#343535"/><path d="M89 71 92 63H108V71Z" fill="#d8d8d8" stroke="#343535"/>
<path d="M125 52H143V70H125Z" fill="#c8c8c8"/><path d="M129 52H139V59H129ZM130 63H138V70H130Z" fill="#343535"/><rect x="134" y="65" width="3" height="5" fill="#c8c8c8"/>
<path d="M170 54H180V68H170V64" fill="none" stroke="#d0d0d0" stroke-width="1.800"/><path d="M162 61H168V58L175 62 168 66V63H162Z" fill="#d0d0d0"/>
<path d="M201 68V54H209L212 57V68Z" fill="none" stroke="#d0d0d0" stroke-width="1.800"/><path d="M205 61H211V58L217 62 211 66V63H205Z" fill="#d0d0d0" stroke="#343535" stroke-width=".5"/>
<path d="M235 58 243 52V56C250 56 254 60 254 66 254 69 252 71 251 71 252 66 248 61 243 61V65Z" fill="#bdbdbd"/>
<path d="M289 58 281 52V56C274 56 271 60 271 66 271 69 272 71 274 71 272 66 276 61 281 61V65Z" fill="#4c4c4c"/>
<!-- add group -->
<use href="#plus" x="388" y="53"/>
<circle cx="396" cy="58" r="3.500" fill="#bdbdbd"/><circle cx="404" cy="58" r="3.500" fill="#bdbdbd"/><path d="M392 62H406V71H392ZM406 64 411 62V71L406 69Z" fill="#bdbdbd"/>
<use href="#plus" x="425" y="53"/>
<path d="M429 73 443 60M435 74 444 62M444 74 446 62M426 67 440 59" stroke="#bdbdbd" stroke-width="1.200"/><path d="M440 57 447 56 447 64Z" fill="#bdbdbd"/>
<use href="#plus" x="462" y="52"/>
<g stroke="#a8a8a8" stroke-width="1.500"><path d="M471 50V56M471 66V72M460 61H466M476 61H482M463 53 467 57M475 65 479 69M479 53 475 57M467 65 463 69"/></g><path d="M469 66 471 57 473 66Z" fill="#ccc"/>
<use href="#plus" x="497" y="53"/>
<circle cx="508" cy="63" r="9" fill="none" stroke="#bdbdbd" stroke-width="1.800"/><circle cx="508" cy="63" r="5" fill="none" stroke="#999" stroke-width="1.200" stroke-dasharray="2 1.500"/><path d="M504 68 508 59 512 68" fill="none" stroke="#bdbdbd"/>
<use href="#plus" x="534" y="53"/>
<path d="M540 59 547 52 553 58 546 65Z" fill="#bdbdbd"/><path d="M532 72 542 64M536 74 544 66M538 63 530 66" stroke="#888" stroke-width="1.200"/>
<use href="#plus" x="570" y="53"/>
<circle cx="580" cy="66" r="5" fill="#c8c8c8"/><path d="M586 61 589 55 593 64Z" fill="none" stroke="#c8c8c8" stroke-width="1.600"/><path d="M570 65H580V75H570Z" fill="#343535" stroke="#c8c8c8" stroke-width="1.600"/>
<use href="#plus" x="606" y="53"/>
<circle cx="618" cy="64" r="7.500" fill="none" stroke="#aaa" stroke-width="2.600" stroke-dasharray="5 3"/>
<path d="M641.500 51V73" stroke="#ccc" stroke-width="1.200"/>
<path d="M644 52H660V56H644ZM644 59H658V63H644ZM644 67H662V72H644Z" fill="#777"/>
<!-- grid -->
<g fill="#6e6032"><rect x="757" y="52" width="24" height="5"/><rect x="757" y="58" width="5" height="5"/><rect x="776" y="58" width="5" height="5"/><rect x="757" y="64" width="24" height="5"/><rect x="757" y="70" width="24" height="5"/></g>
<g fill="#fac62a"><rect x="764" y="58" width="7" height="5"/><rect x="762" y="64" width="5" height="5"/><rect x="768" y="64" width="5" height="5"/><rect x="774" y="64" width="5" height="5"/></g>
<g stroke="#343535" stroke-width="1"><path d="M763 52V57M769 52V57M775 52V57M765 70V75M771 70V75M777 70V75"/></g>
<!-- nav -->
<circle cx="805" cy="63" r="11.500" fill="none" stroke="#aaa" stroke-width="1.400"/><path d="M805 54 809 59H801ZM805 72 809 67H801ZM796 63 801 59V67ZM814 63 809 59V67Z" fill="#b8b8b8"/><circle cx="805" cy="63" r="2" fill="#b8b8b8"/>
<!-- tool arrows -->
<path d="M834 50V73L839 68 843 74 847 71 844 66H850Z" fill="#343535" stroke="#d0d0d0" stroke-width="1.800"/>
<circle cx="873" cy="65" r="8" fill="none" stroke="#bdbdbd" stroke-width="2.400"/><path d="M869 65H877M873 61V69" stroke="#999" stroke-width="1.400"/><path d="M878 68 884 68 881 75 877 74Z" fill="#bdbdbd"/><use href="#cur" x="882" y="50"/>
<path d="M917 59A8 8 0 1 0 906 72" fill="none" stroke="#f5c030" stroke-width="2.600"/><path d="M912 66H921L918 75H911Z" fill="#f5c030"/><path d="M919 50V61L921.600 58.600 923.600 62 925.400 61 923.600 57.800H927Z" fill="#343535" stroke="#f5c030"/>
<path d="M948 51 953 57H950V61H954V58L961 63 954 68V65H950V69H953L948 75 943 69H946V65H942V68L935 63 942 58V61H946V57H943Z" fill="#d0d0d0"/><use href="#cur" x="955" y="50"/>
<path d="M982 58H996V67H982Z M973 65H983V75H973Z" fill="none" stroke="#d0d0d0" stroke-width="1.500"/><rect x="975" y="67" width="5" height="5" fill="#d0d0d0"/><use href="#cur" x="992" y="49"/>
<path d="M1012 55C1016 51 1022 54 1021 59L1027 65C1032 64 1034 71 1029 73 1025 74 1022 71 1023 68L1017 62C1012 63 1009 58 1012 55Z" fill="none" stroke="#808080" stroke-width="1.800"/><path d="M1010 66 1020 71M1011 70 1020 74" stroke="#666"/><use href="#cur" x="1027" y="50"/>
<path d="M1050 50H1066L1058 64Z" fill="#c4c4c4"/><path d="M1049 74 1052 60 1058 70 1064 60 1067 74" fill="none" stroke="#808080" stroke-width="3.400"/><use href="#cur" x="1063" y="52"/>
<path d="M1082 62 1092 54 1102 62 1092 72Z" fill="#bdbdbd"/><path d="M1081 68 1089 76 1094 72M1081 68 1086 63" fill="none" stroke="#bdbdbd" stroke-width="1.400"/><path d="M1089 54H1100V62" fill="none" stroke="#888" stroke-width="1"/><use href="#cur" x="1098" y="49"/>
<circle cx="1127" cy="57" r="6.500" fill="#808080"/><path d="M1117 75C1117 66 1122 63 1127 63S1138 66 1138 75Z" fill="#bdbdbd"/><use href="#cur" x="1135" y="50"/>
<path d="M1155 58H1160L1162 56H1168L1170 58H1175V74H1155Z" fill="#bdbdbd"/><circle cx="1162" cy="67" r="4" fill="#555" stroke="#343535"/><use href="#cur" x="1171" y="50"/>
<path d="M1193 50V72L1199 66 1203 74 1207 72 1203 64H1211Z" fill="#343535" stroke="#b8b8b8" stroke-width="1.400"/>
<circle cx="1208" cy="57" r="5" fill="#343535" stroke="#c8c8c8" stroke-width="3" stroke-dasharray="2.400 1.400"/>
<circle cx="1233" cy="66" r="8" fill="#8e8e8e"/><path d="M1227 72Q1238 70 1240 60" fill="none" stroke="#444" stroke-width="1.500"/>
<circle cx="1244" cy="56" r="4.500" fill="#343535" stroke="#c8c8c8" stroke-width="3" stroke-dasharray="2.400 1.400"/>
<path d="M1263 60H1267L1269 58H1275L1277 60H1282V74H1263Z" fill="#bdbdbd"/><circle cx="1270" cy="67" r="4" fill="#555" stroke="#343535"/>
<circle cx="1279" cy="55" r="4.500" fill="#343535" stroke="#c8c8c8" stroke-width="3" stroke-dasharray="2.400 1.400"/>
<path d="M1300 54H1306L1308 52H1316L1318 54H1324V70H1300Z" fill="#bdbdbd" stroke="#bdbdbd" stroke-linejoin="round" stroke-width="1.500"/><circle cx="1311" cy="63" r="5" fill="#666" stroke="#343535" stroke-width="1.600"/>
<!-- home / help -->
<path d="M1508 50 1522 61H1519V73H1497V61H1494Z" fill="#c4c4c4"/><text x="1500" y="71" font-size="10" fill="#555" font-family="Liberation Sans">DS</text>
<path d="M1536 54V68L1539 65 1542 69 1544 68 1541 64H1545Z" fill="#d0d0d0"/><text x="1543" y="69" font-size="18" font-weight="bold" fill="#d0d0d0" font-family="Liberation Sans">?</text>
<circle cx="1579" cy="61" r="9" fill="none" stroke="#d0d0d0" stroke-width="1.600"/><text x="1575" y="66" font-size="13" font-weight="bold" fill="#d0d0d0" font-family="Liberation Sans">?</text>
<!-- menu icons -->
<rect x="1179" y="81" width="20" height="21" fill="#2c2d2d" stroke="#454545"/><use href="#menu" x="1181" y="85"/>
<rect x="1208" y="88" width="20" height="20" fill="#2c2d2d" stroke="#454545"/><use href="#menu" x="1210" y="89"/>
<rect x="1207" y="330" width="21" height="19" fill="#2c2d2d" stroke="#454545"/><use href="#menu" x="1210" y="331"/>
<rect x="499" y="81" width="20" height="21" fill="#2c2d2d" stroke="#454545"/><use href="#menu" x="501" y="84"/>
<rect x="1580" y="815" width="20" height="20" fill="#2c2d2d" stroke="#454545"/><use href="#menu" x="1582" y="817"/>
<!-- left back -->
<path d="M13 120 19 115V118H25V122H22V125H19V125Z" fill="#111"/>
<!-- search -->
<use href="#srch" x="163" y="148"/><use href="#srch" x="1248" y="105"/><use href="#srch" x="1388" y="346"/>
<path d="M478 171H486L482 177Z" fill="#ddd"/>
<!-- prev next -->
<path d="M1549 105 1555 100V103H1560V107H1555V110ZM1586 105 1580 100V103H1575V107H1580V110Z" fill="#ddd"/>
<!-- arrows -->
<path d="M1142 120H1150L1146 127Z" fill="#ddd"/>
<path d="M1347 342H1355L1351 349Z" fill="#ddd"/>
<path d="M1369 844H1377L1373 851Z" fill="#bbb"/>
<!-- bottom splitter arrows -->
<path d="M792 808H800L796 812ZM802 812H810L806 808Z" fill="#666"/>
<!-- film / spin -->
<use href="#film" x="16" y="744"/><use href="#film" x="16" y="775"/><use href="#film" x="1395" y="624"/>
<use href="#spin" x="25" y="640"/><use href="#spin" x="1407" y="451"/><use href="#spin" x="1407" y="491"/>
<use href="#film" x="1389" y="841" opacity=".35"/>
<!-- checkbox check -->
<path d="M1237 766 1241 771 1249 760" fill="none" stroke="#f8c420" stroke-width="2.600"/>
<!-- viewport icons -->
<rect x="962" y="116" width="14" height="15" fill="#d8c8a8" stroke="#2c2c2c"/><path d="M963 130 975 118M968 130 975 124" stroke="#4a3a20" stroke-width="1.400"/><path d="M964 118H969M966.500 116V121" stroke="#2c2c2c"/>
<path d="M993 113 1000 117V125L993 129 986 125V117Z" fill="#555"/><path d="M993 113 1000 117 993 121 986 117Z" fill="#888"/><rect x="992" y="118" width="2" height="6" fill="#222"/><path d="M1001 131H1007L1004 135Z" fill="#bbb"/>
<path d="M1017 115H1028V131H1017ZM1022.500 115V131M1017 122H1028" fill="none" stroke="#d0d0d0" stroke-width="1.400"/><rect x="1016" y="131" width="13" height="3" fill="#d0d0d0"/>
<path d="M1169 116 1178 120V117H1186V128H1175" fill="none" stroke="#6c6050" stroke-width="1.200"/><path d="M1171 117 1178 120 1171 123Z" fill="#eee"/><path d="M1172 125H1186M1172 128H1186M1172 131H1186" stroke="#6c5040" stroke-width="1.200" fill="none"/>
<g fill="#cfcfcf" stroke="#7a6e66" stroke-width="1">
<circle cx="1178" cy="146" r="4"/><path d="M1173 150C1166 152 1166 158 1173 160H1184V163L1190 157 1184 154V157H1174C1172 155 1172 153 1175 152Z"/>
<path d="M1178 168 1182 172H1180V175H1183V173L1187 177 1183 181V179H1180V182H1182L1178 186 1174 182H1176V179H1173V181L1169 177 1173 173V175H1176V172H1174Z"/>
<circle cx="1181" cy="201" r="6.500" fill="none" stroke="#7a6e66" stroke-width="4"/><path d="M1176 206 1169 214" stroke="#7a6e66" stroke-width="5"/>
<circle cx="1181" cy="201" r="6.500" fill="none" stroke="#d4d4d4" stroke-width="2.400"/><path d="M1176 206 1169 214" stroke="#d4d4d4" stroke-width="3.200"/>
<path d="M1169 226V222H1173M1183 222H1188V226M1188 237V242H1183M1173 242H1169V237" fill="none" stroke="#7a6e66" stroke-width="3"/>
<path d="M1169 226V222H1173M1183 222H1188V226M1188 237V242H1183M1173 242H1169V237" fill="none" stroke="#d4d4d4" stroke-width="1.600"/><path d="M1178 229 1181 232 1178 235 1175 232Z"/>
<circle cx="1178" cy="258" r="10"/><path d="M1172 261 1178 254 1184 261M1178 254V268" fill="none" stroke="#f0f0f0" stroke-width="2"/>
</g>
<!-- taskbar -->
<g fill="#fff"><path d="M16 874 23 873V879.500H16ZM24 872.800 32 871.600V879.500H24ZM16 880.500H23V887L16 886ZM24 880.500H32V888.400L24 887.200Z"/></g>
<circle cx="72" cy="876" r="5.500" fill="none" stroke="#e0e0e0" stroke-width="1.300"/><path d="M68 880.500 61 887.500" stroke="#e0e0e0" stroke-width="1.400"/>
<circle cx="416" cy="880" r="7" fill="none" stroke="#fff" stroke-width="2"/>
<path d="M457 872H468M457 888H468M457 875.500H468V884.500H457ZM471 873V878M471 882V887" fill="none" stroke="#fff" stroke-width="1.400"/>
<circle cx="564" cy="880" r="11" fill="#3a3a3a" stroke="#c8c8c8" stroke-width="1.400"/><path d="M564 872 570 876 566 881ZM557 886 556 878 563 881ZM571 885 564 889 565 882Z" fill="#ddd"/>
<rect x="601" y="871" width="24" height="11" fill="#e8402a"/><text x="613" y="880" text-anchor="middle" font-size="7.500" font-weight="bold" fill="#fff" font-family="Liberation Sans">VOICE</text><rect x="601" y="883" width="24" height="7" fill="#3c4a54"/><text x="613" y="889" text-anchor="middle" font-size="5.500" font-weight="bold" fill="#ccc" font-family="Liberation Sans">MEETER</text>
<circle cx="662" cy="880" r="10.500" fill="#1a1a3a" stroke="#cfcfcf" stroke-width="1.400"/><text x="662" y="884.500" text-anchor="middle" font-size="11" font-weight="bold" fill="#fff" font-family="Liberation Sans">4K</text>
<circle cx="711" cy="880" r="12" fill="#1172c4"/><path d="M699 880C700 868 712 864 719 869 724 872 723 880 721 882 720 878 715 875 709 875 703 875 700 878 699 880Z" fill="#35c6a0"/><path d="M707 883C708 876 718 878 720 883 717 892 705 892 707 883Z" fill="#0d4e90"/><circle cx="722" cy="877" r="3.500" fill="#5fd060"/>
<rect x="762" y="871" width="13" height="12" fill="#1490df"/><path d="M757 881 775 881V892H757Z" fill="#0a5fa8"/><rect x="748" y="873" width="14" height="14" fill="#0072c6"/><text x="755" y="884.500" text-anchor="middle" font-size="11" font-weight="bold" fill="#fff" font-family="Liberation Sans">O</text>
<rect x="803" y="871" width="18" height="22" fill="#2b7cd3"/><rect x="803" y="878" width="18" height="7" fill="#185abd"/><rect x="803" y="885" width="18" height="7" fill="#103f91"/><rect x="797" y="875" width="13" height="13" fill="#185abd"/><text x="803.500" y="885.500" text-anchor="middle" font-size="10" font-weight="bold" fill="#fff" font-family="Liberation Sans">W</text>
<path d="M847 871H856L859 874H868V890H847Z" fill="#f5c63c"/><rect x="847" y="876" width="21" height="3" fill="#e3a720"/><path d="M851 890V885H864V890H860V887H855V890Z" fill="#2d8ed0"/>
<path d="M899 873 918 880V890L902 884Z" fill="#47b4f0"/><path d="M896 890 906 885 914 889 906 892Z" fill="#d8d8d8"/><path d="M906 892H916" stroke="#ccc"/>
<rect x="945" y="869" width="23" height="23" rx="2" fill="#1f1f1f"/><text x="956.500" y="885" text-anchor="middle" font-size="14" fill="#d4a428" font-family="Liberation Sans">DS</text>
<rect x="994" y="869" width="21" height="22" rx="4" fill="#00005b"/><text x="1004.500" y="885" text-anchor="middle" font-size="12" font-weight="bold" fill="#9999ff" font-family="Liberation Sans">Me</text>
<rect x="1043" y="869" width="22" height="22" rx="4" fill="#00005b"/><text x="1054" y="885" text-anchor="middle" font-size="13" font-weight="bold" fill="#9999ff" font-family="Liberation Sans">Pr</text>
<rect x="1092" y="869" width="22" height="22" rx="4" fill="#001e36"/><text x="1103" y="885" text-anchor="middle" font-size="13" font-weight="bold" fill="#31a8ff" font-family="Liberation Sans">Ps</text>
<circle cx="1151" cy="880" r="10.500" fill="#1a9be6"/><rect x="1141" y="870" width="10" height="10" rx="3" fill="#1a9be6"/><text x="1152" y="885" text-anchor="middle" font-size="14" font-weight="bold" fill="#fff" font-family="Liberation Sans">S</text>
<circle cx="1165" cy="891" r="7.500" fill="#2a3a4a" stroke="#9a9a9a"/><text x="1165" y="895" text-anchor="middle" font-size="10" fill="#fff" font-family="Liberation Sans">1</text>
<rect x="1189" y="868" width="24" height="24" rx="6" fill="#7a4bdc"/><circle cx="1201" cy="880" r="7" fill="none" stroke="#fff" stroke-width="2"/>
<path d="M1393 884 1399 878 1405 884" fill="none" stroke="#fff" stroke-width="1.400"/>
<path d="M1416 885C1414 880 1419 878 1421 880 1423 875 1430 876 1431 881 1434 881 1435 885 1432 885Z" fill="#f0f0f0"/>
<path d="M1439.500 875.500H1455V886.500H1439.500ZM1447 887V890M1443 890.500H1452M1439 875.500H1443V880.500H1439" fill="none" stroke="#fff" stroke-width="1.100"/>
<path d="M1463 878H1466L1470 874V887L1466 883H1463ZM1473 877Q1475 880.500 1473 884M1475.500 875Q1478 880.500 1475.500 886" fill="none" stroke="#fff" stroke-width="1.100"/>
<path d="M1559 873H1574V885H1570L1566 889V885H1559Z" fill="#fff"/><path d="M1562 877H1571M1562 880H1571" stroke="#222"/>
<path d="M1598.500 860V898" stroke="#8a9aa8"/>
</svg>
</div></body></html>
